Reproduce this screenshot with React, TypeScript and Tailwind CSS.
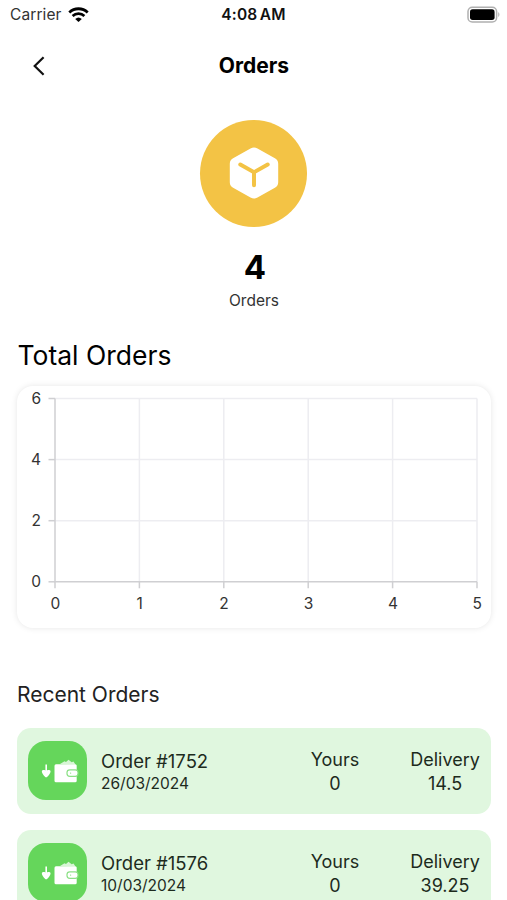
/**
 * Orders screen
 *
 * Shows the number of orders, the total orders chart and the list of
 * recent orders with the driver's own share and the delivery amount.
 */

type Order = {
  id: number;
  date: string;
  yours: string;
  delivery: string;
};

const orders: Order[] = [
  { id: 1752, date: "26/03/2024", yours: "0", delivery: "14.5" },
  { id: 1576, date: "10/03/2024", yours: "0", delivery: "39.25" },
];

// Chart geometry, in the card's own coordinates
const LEFT = 38;
const TOP = 12.5;
const STEP_X = 84.4;
const STEP_Y = 61.1;
const RIGHT = LEFT + STEP_X * 5;
const BOTTOM = TOP + STEP_Y * 3;

function StatusBar() {
  return (
    <div className="grid h-[30px] grid-cols-3 items-center pl-2.5 pr-[7px] text-[#333]">
      <div className="flex items-center gap-1.5">
        <span className="text-[15.5px] tracking-[0.1px]">Carrier</span>
        <svg className="mb-0.5" width="21" height="15" viewBox="0 0 21 15" fill="none" stroke="#000">
          <path d="M1.3 5.4a13.4 13.4 0 0 1 18.4 0" strokeWidth="2.8" />
          <path d="M4.6 9a8.6 8.6 0 0 1 11.8 0" strokeWidth="2.7" />
          <path d="M10.5 15 7.2 11.9a4.9 4.9 0 0 1 6.6 0Z" fill="#000" stroke="none" />
        </svg>
      </div>
      <span className="pr-[3px] text-center text-[15.5px] font-semibold tracking-[0.2px] text-[#111] [word-spacing:-1.8px]">
        4:08 AM
      </span>
      <svg className="mb-0.5 justify-self-end" width="33" height="17" viewBox="0 0 33 17">
        <rect x="1" y="1.2" width="28.6" height="14.8" rx="4.3" fill="none" stroke="#b0b0b0" strokeWidth="1.5" />
        <rect x="3" y="3.3" width="24.6" height="10.6" rx="2.6" fill="#000" />
        <path d="M31.3 6.2c1.4.5 1.4 4.2 0 4.7Z" fill="#a8a8a8" />
      </svg>
    </div>
  );
}

function Header() {
  return (
    <div className="grid h-[70px] grid-cols-3 items-center px-8 pt-px">
      <button aria-label="Back" className="w-4">
        <svg width="14" height="20" viewBox="0 0 14 20" fill="none" stroke="#111" strokeWidth="2.2">
          <path d="M11.6 1.2 2.7 10l8.9 8.8" />
        </svg>
      </button>
      <h1 className="pl-px pt-px text-center text-[21px] font-bold">Orders</h1>
    </div>
  );
}

function OrdersSummary() {
  return (
    <div className="flex flex-col items-center pt-[19.500px]">
      <div className="flex size-[107px] items-center justify-center rounded-full bg-[#f3c345]">
        <svg width="50" height="54" viewBox="0 0 50 54" fill="none">
          <path
            d="M21.5 2.4a7 7 0 0 1 7 0L45.9 12.2a6.5 6.5 0 0 1 3.3 5.7v18.2a6.5 6.5 0 0 1-3.3 5.7L28.5 51.6a7 7 0 0 1-7 0L4.1 41.8a6.5 6.5 0 0 1-3.3-5.7V17.9a6.5 6.5 0 0 1 3.3-5.7Z"
            fill="#fff"
          />
          <path
            d="M11.3 18.6 25 26.3l13.7-7.7M25 26.3v13"
            stroke="#f3c345"
            strokeWidth="4"
            strokeLinecap="round"
          />
        </svg>
      </div>
      <div className="mt-[20.500px] pl-[3px] text-[33px] font-bold leading-10">4</div>
      <div className="mt-1 pl-px text-[15.5px] leading-5 text-[#333]">Orders</div>
    </div>
  );
}

function OrdersChart() {
  return (
    <div className="ml-[17px] mr-4 mt-[13px] h-[242px] rounded-2xl bg-white shadow-[0_0_6px_rgba(0,0,0,0.1)]">
      <svg width="474" height="242" viewBox="0 0 474 242" fontSize="15.5" fill="#333">
        {[0, 1, 2].map((i) => (
          <path key={i} d={`M${LEFT} ${TOP + i * STEP_Y}H${RIGHT}`} stroke="#ededf1" strokeWidth="1.5" />
        ))}
        {[1, 2, 3, 4, 5].map((i) => (
          <path key={i} d={`M${LEFT + i * STEP_X} ${TOP}V${BOTTOM}`} stroke="#ededf1" strokeWidth="1.5" />
        ))}

        {/* Axes */}
        <path d={`M${LEFT} ${TOP}V${BOTTOM}H${RIGHT}`} fill="none" stroke="#cfcfd2" strokeWidth="1.5" />

        {/* Vertical axis ticks and labels */}
        {[6, 4, 2, 0].map((value, i) => (
          <g key={value}>
            <path d={`M${LEFT - 6.5} ${TOP + i * STEP_Y}H${LEFT}`} stroke="#cfcfd2" strokeWidth="1.5" />
            <text x="24" y={TOP + i * STEP_Y + 5.5} textAnchor="end">
              {value}
            </text>
          </g>
        ))}

        {/* Horizontal axis ticks and labels */}
        {[0, 1, 2, 3, 4, 5].map((value) => (
          <g key={value}>
            <path d={`M${LEFT + value * STEP_X} ${BOTTOM}v6.5`} stroke="#cfcfd2" strokeWidth="1.5" />
            <text x={LEFT + value * STEP_X + 0.3} y={BOTTOM + 27} textAnchor="middle">
              {value}
            </text>
          </g>
        ))}
      </svg>
    </div>
  );
}

function WalletIcon() {
  return (
    <svg width="59" height="59" viewBox="0 0 59 59" fill="#fff">
      {/* Incoming arrow */}
      <path d="M17.4 23.6h1.6v5.8c1.3-.8 3.100-.5 3.500.5.500 1.500-2.800 6.400-4.300 6.400s-4.800-4.900-4.300-6.400c.4-1 2.200-1.300 3.500-.5Z" />
      {/* Wallet with notes sticking out */}
      <path d="m32 23 4.500-2.700 1.500.8 2.500-2.300 3.200 2.400 1.800-.6 2 3Z" opacity="0.75" />
      <path d="M28 23.300h19.200a1.500 1.500 0 0 1 1.500 1.500v15a1.500 1.500 0 0 1-1.500 1.500H28a1.500 1.500 0 0 1-1.500-1.500v-15a1.500 1.500 0 0 1 1.500-1.500Z" />
      <rect x="39" y="28.800" width="11" height="6.600" rx="2.800" stroke="#8be085" strokeWidth="1.200" />
      <circle cx="42.600" cy="32.100" r="0.700" fill="#8be085" />
    </svg>
  );
}

function OrderRow({ order }: { order: Order }) {
  return (
    <div className="flex h-[86px] items-start rounded-[14px] bg-[#e0f7df] pl-[11px] text-[#1d2b1d]">
      <div className="mt-[13px] size-[59px] shrink-0 rounded-[18px] bg-[#65d65b]">
        <WalletIcon />
      </div>
      <div className="ml-3.5 mt-[21px] flex-1">
        <div className="text-[18.5px] leading-6">Order #{order.id}</div>
        <div className="text-[15.5px] leading-[22px]">{order.date}</div>
      </div>
      <div className="mt-5 w-[70px] text-center text-[18px] leading-6">
        <div>Yours</div>
        <div>{order.yours}</div>
      </div>
      <div className="ml-[35px] mr-1.5 mt-5 w-20 text-center text-[18px] leading-6">
        <div>Delivery</div>
        <div>{order.delivery}</div>
      </div>
    </div>
  );
}

export default function App() {
  return (
    <div className="h-[900px] w-[507px] overflow-hidden bg-white font-['Inter',sans-serif] text-black">
      <StatusBar />
      <Header />
      <OrdersSummary />

      <h2 className="ml-[17.500px] mt-[26px] text-[26.5px] font-[430] leading-9">Total Orders</h2>
      <OrdersChart />

      <h3 className="ml-[17px] mt-[51px] text-[21px] leading-8 text-[#222]">Recent Orders</h3>
      <div className="ml-[17px] mr-4 mt-[17px] flex flex-col gap-[16.400px]">
        {orders.map((order) => (
          <OrderRow key={order.id} order={order} />
        ))}
      </div>
    </div>
  );
}
